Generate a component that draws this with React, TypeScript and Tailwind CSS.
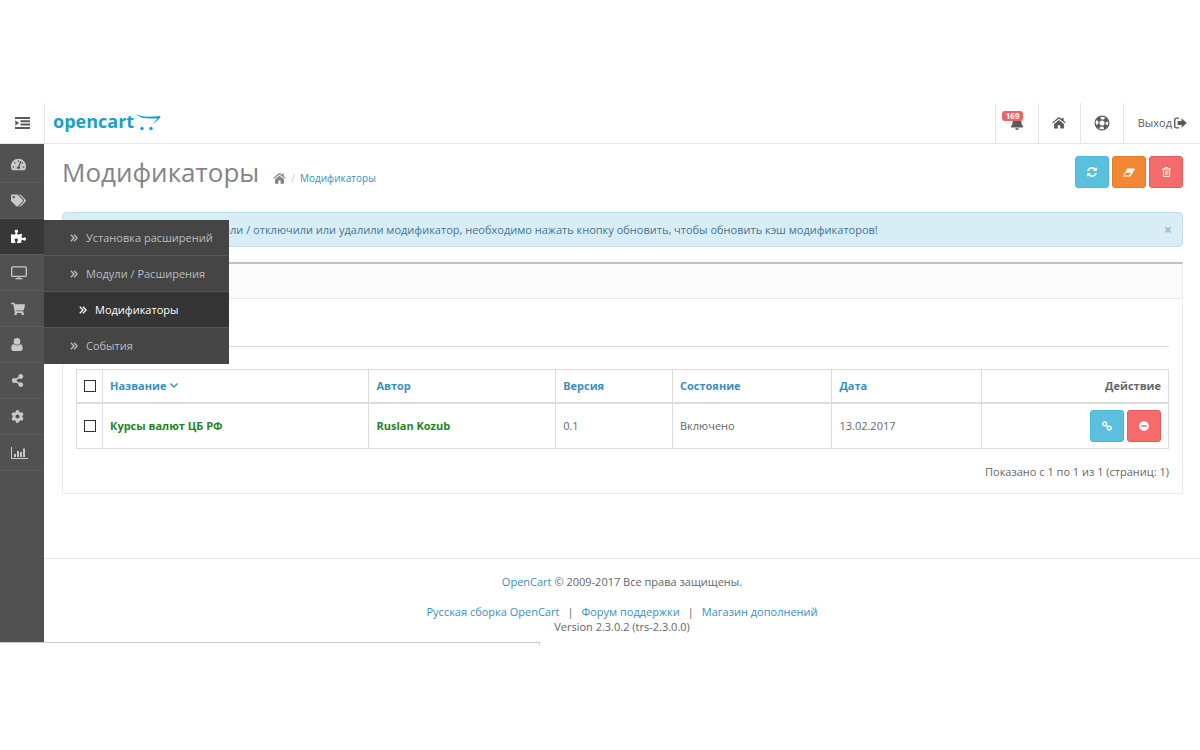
import type { ReactNode } from "react";
import {
  FaBell,
  FaCog,
  FaInfoCircle,
  FaMinusCircle,
  FaPuzzlePiece,
  FaShareAlt,
  FaShoppingCart,
  FaTachometerAlt,
  FaTags,
} from "react-icons/fa";

const DedentIcon = () => (
  <svg viewBox="0 0 15 12" className="h-3 w-[15px]" fill="currentColor">
    <path d="M0 0h15v2H0zM5.500 3.300h9.500v2H5.500zM5.500 6.600h9.500v2H5.500zM0 10h15v2H0zM0.300 3.200l3.800 2.800L0.300 8.800z" />
  </svg>
);

const HomeIcon = ({ className }: { className: string }) => (
  <svg viewBox="0 0 14 12" className={className} fill="currentColor">
    <path d="M7 2.900l4.900 4V11c0 .4-.2.600-.6.600H8.200V8.300H5.800v3.300H2.700c-.4 0-.6-.2-.6-.6V6.900z" />
    <path d="M6.300.400c.4-.3 1-.3 1.400 0l2 1.700V.900h1.900v2.700l2.200 1.900-.7.800L7 1.700.9 6.300.200 5.500z" />
  </svg>
);

const AngleIcon = () => (
  <svg viewBox="0 0 8 8" className="size-2" fill="none" stroke="currentColor" strokeWidth="1.300">
    <path d="M0.800 0.700L4 4L0.800 7.300M4 0.700L7.200 4L4 7.300" />
  </svg>
);

const ScreenIcon = () => (
  <svg viewBox="0 0 16 14" className="h-3.5 w-4" fill="none" stroke="currentColor" strokeWidth="1.3">
    <rect x="0.7" y="0.8" width="14.6" height="9.6" rx="1" />
    <path d="M8 10.4v2M4.5 12.6h7" />
  </svg>
);

const UserIcon = () => (
  <svg viewBox="0 0 12 13" className="h-[13px] w-3" fill="currentColor">
    <circle cx="6" cy="3.4" r="3.3" />
    <path d="M2.8 6C1 6.200 0.300 8 0.300 10.500C0.300 12 1.200 13 2.500 13h7c1.300 0 2.200-1 2.200-2.500C11.700 8 11 6.200 9.200 6C8.300 7 7.200 7.400 6 7.400S3.700 7 2.800 6z" />
  </svg>
);

const ChartIcon = () => (
  <svg viewBox="0 0 17 12" className="h-3 w-[17px]" fill="currentColor">
    <path d="M0 0h1v11h16v1H0zM3 7h2v3H3zM6 4h2v6H6zM9 5h2v5H9zM12 1.500h2v8.500h-2z" />
  </svg>
);

const LifeRingIcon = () => (
  <svg viewBox="0 0 16 16" className="size-4" fill="none" stroke="currentColor">
    <circle cx="8" cy="8" r="6.900" strokeWidth="1.200" />
    <circle cx="8" cy="8" r="3.200" strokeWidth="1.200" />
    <circle cx="8" cy="8" r="5.100" strokeWidth="3.200" strokeDasharray="4 4.010" strokeDashoffset="-2" />
  </svg>
);

const SignOutIcon = () => (
  <svg viewBox="0 0 13 12" className="h-3 w-[13px]" fill="currentColor">
    <path d="M5 0.500v1.300H2.600c-.8 0-1.200.4-1.200 1.200v6c0 .8.400 1.200 1.200 1.200H5v1.300H2.500C.9 11.500 0 10.600 0 9V3C0 1.400.9.500 2.500.500z" />
    <path d="M7.600 1.200L12.800 6l-5.200 4.800V8H3.600V4h4z" />
  </svg>
);

const RefreshIcon = () => (
  <svg viewBox="0 0 10 10" className="size-2.5" fill="currentColor">
    <path d="M0.100 4C.6 1.700 2.600 0 5 0c1.300 0 2.500.5 3.400 1.400L9.800.200V4H6l1.300-1.400C6.700 2 5.900 1.700 5 1.700 3.600 1.700 2.400 2.600 1.900 4z" />
    <path d="M9.900 6C9.400 8.300 7.400 10 5 10c-1.300 0-2.500-.5-3.400-1.400L.2 9.800V6H4L2.700 7.400c.6.600 1.400.9 2.300.9 1.400 0 2.600-.9 3.100-2.300z" />
  </svg>
);

const EraserIcon = () => (
  <svg viewBox="0 0 12 9" className="h-[9px] w-3" fill="currentColor">
    <path d="M4.700.500h6.600c.5 0 .8.500.5.900L7.600 7.900c-.2.300-.5.500-.9.500H.700c-.5 0-.8-.5-.5-.9L4 .900C4.100.600 4.400.500 4.700.500zM6.100 7.500l1.800-2.700H3L1.200 7.500z" />
  </svg>
);

const TrashIcon = () => (
  <svg viewBox="0 0 9 10" className="h-2.5 w-[9px]" fill="none" stroke="currentColor">
    <path d="M0 2h9M3 2V.600h3V2M1.400 2v7.400h6.200V2" />
    <path d="M3.300 3.600v4.400M4.600 3.600v4.400M5.900 3.600v4.400" strokeWidth="0.700" />
  </svg>
);

const ChainIcon = () => (
  <svg viewBox="0 0 10 10" className="size-2.5" fill="none" stroke="currentColor" strokeWidth="1.400">
    <circle cx="2.700" cy="2.900" r="1.900" />
    <circle cx="7.300" cy="7.100" r="1.900" />
    <path d="M3.500 3.700l3 2.700" />
  </svg>
);

const ChevronIcon = () => (
  <svg
    viewBox="0 0 8 5"
    className="mb-0.5 ml-px inline h-[5px] w-2"
    fill="none"
    stroke="currentColor"
    strokeWidth="1.400"
  >
    <path d="M0.500 0.500L4 4L7.500 0.500" />
  </svg>
);

const CartMark = () => (
  <svg viewBox="0 0 25 17" className="mt-0.5 h-[17px] w-[25px]" fill="#1b9fcb">
    <path d="M0 0.300C4 2.600 11 3.300 24 2.100C24.800 2.100 24.700 3 24 3.700C21.500 6.400 19 8.600 16.200 10.600C18 8.200 20 6.200 21.500 4.400C12 5 3.500 4.500 0 0.300z" />
    <circle cx="6" cy="14.500" r="1.700" />
    <circle cx="15" cy="14.500" r="1.700" />
  </svg>
);

const navItems: { label: string; icon: ReactNode }[] = [
  { label: "Панель состояния", icon: <FaTachometerAlt className="size-[15px]" /> },
  { label: "Каталог", icon: <FaTags className="size-[15px]" /> },
  { label: "Расширения", icon: <FaPuzzlePiece className="size-[15px]" /> },
  { label: "Дизайн", icon: <ScreenIcon /> },
  { label: "Продажи", icon: <FaShoppingCart className="size-3.5" /> },
  { label: "Покупатели", icon: <UserIcon /> },
  { label: "Маркетинг", icon: <FaShareAlt className="size-[13px]" /> },
  { label: "Система", icon: <FaCog className="size-[13px]" /> },
  { label: "Отчёты", icon: <ChartIcon /> },
];

const submenu = ["Установка расширений", "Модули / Расширения", "Модификаторы", "События"];
const active = "Модификаторы";

const columns = [
  { title: "Автор", width: "w-[17.1%]" },
  { title: "Версия", width: "w-[10.7%]" },
  { title: "Состояние", width: "w-[14.6%]" },
  { title: "Дата", width: "w-[13.7%]" },
];

const link = "text-[#3a8fbe] hover:underline";
const cell = "border border-[#ddd] px-[7px]";
const button = "flex h-8 w-[34px] items-center justify-center rounded-[3px] border text-white";
const topLink = "flex items-center justify-center border-l border-[#e4e4e4]";
const checkbox = "block size-3 appearance-none border border-[#333] bg-white checked:bg-[#333]";

function Header() {
  return (
    <header className="flex h-[41px] border-b border-[#e6e6e6] text-[#5a5a5a]">
      <button aria-label="Меню" className="flex w-11 shrink-0 items-center justify-center">
        <DedentIcon />
      </button>
      <a href="#" className="flex items-center gap-0.5 border-l border-[#e4e4e4] pl-2 pb-1">
        <span className="text-[18px] leading-6 font-bold text-[#1b9fcb]">opencart</span>
        <CartMark />
      </a>
      <nav className="ml-auto flex">
        <a href="#" aria-label="Уведомления" className={`${topLink} relative w-[43px]`}>
          <FaBell className="size-3.5" />
          <span className="absolute top-2 left-1.5 rounded-[3px] bg-[#ee6363] px-1 text-[8px] leading-[10px] font-bold text-white">
            169
          </span>
        </a>
        <a href="#" aria-label="Магазин" className={`${topLink} w-[42px]`}>
          <HomeIcon className="h-3 w-3.5" />
        </a>
        <a href="#" aria-label="Помощь" className={`${topLink} w-[43px]`}>
          <LifeRingIcon />
        </a>
        <a href="#" className={`${topLink} gap-0.5 pr-[13px] pl-3.5`}>
          Выход <SignOutIcon />
        </a>
      </nav>
    </header>
  );
}

function Sidebar() {
  return (
    <aside className="relative w-11 shrink-0 bg-[#515151] pt-[3px]">
      <ul>
        {navItems.map((item) => (
          <li key={item.label} className="border-b border-[#5b5b5b]">
            <a
              href="#"
              aria-label={item.label}
              className={`flex h-[35px] items-center pl-[11px] ${
                item.label === "Расширения" ? "bg-[#373737] text-white" : "text-[#c9c9c9]"
              }`}
            >
              {item.icon}
            </a>
          </li>
        ))}
      </ul>
      {/* flyout of the extensions item */}
      <ul className="absolute top-[76px] left-11 z-10 w-[185px] bg-[#454545]">
        {submenu.map((label) => (
          <li key={label} className="border-b border-[#555] last:border-transparent">
            <a
              href="#"
              className={`flex h-[35px] items-center gap-2 ${
                label === active ? "bg-[#353535] pl-[35px] text-white" : "pl-[26px] text-[#bdbdbd]"
              }`}
            >
              <AngleIcon />
              {label}
            </a>
          </li>
        ))}
      </ul>
    </aside>
  );
}

function ModificationTable() {
  return (
    <table className="w-full table-fixed border-collapse text-left">
      <thead>
        <tr className="h-[33px] border-b-2 border-[#ddd]">
          <th className={`${cell} w-[26px]`}>
            <input type="checkbox" aria-label="Выбрать все" className={checkbox} />
          </th>
          <th className={`${cell} w-[24.4%]`}>
            <a href="#" className={link}>
              Название <ChevronIcon />
            </a>
          </th>
          {columns.map((col) => (
            <th key={col.title} className={`${cell} ${col.width}`}>
              <a href="#" className={link}>
                {col.title}
              </a>
            </th>
          ))}
          <th className={`${cell} text-right`}>Действие</th>
        </tr>
      </thead>
      <tbody>
        <tr className="h-[46px]">
          <td className={cell}>
            <input type="checkbox" aria-label="Курсы валют ЦБ РФ" className={checkbox} />
          </td>
          <td className={`${cell} font-bold text-[#1f851f]`}>Курсы валют ЦБ РФ</td>
          <td className={`${cell} font-bold text-[#1f851f]`}>Ruslan Kozub</td>
          <td className={cell}>0.1</td>
          <td className={cell}>Включено</td>
          <td className={cell}>13.02.2017</td>
          <td className={cell}>
            <div className="flex justify-end gap-[3px]">
              <a href="#" aria-label="Ссылка" className={`${button} border-[#46b8da] bg-[#5bc0de]`}>
                <ChainIcon />
              </a>
              <button aria-label="Отключить" className={`${button} border-[#e25c60] bg-[#f56b6b]`}>
                <FaMinusCircle className="size-2.5" />
              </button>
            </div>
          </td>
        </tr>
      </tbody>
    </table>
  );
}

function Content() {
  return (
    <main className="pt-3 pr-[17px] pl-[18px]">
      <div className="flex items-start">
        <h1 className="text-[26px] leading-8 text-[#848484]">Модификаторы</h1>
        <nav aria-label="Навигация" className="mt-3.5 ml-3.5 flex items-center text-[10px] leading-4">
          <a href="#" aria-label="Главная" className="text-[#848484]">
            <HomeIcon className="h-[11px] w-[13px]" />
          </a>
          <span className="px-[5px] text-[#ccc]">/</span>
          <a href="#" className={link}>
            Модификаторы
          </a>
        </nav>
        <div className="ml-auto flex gap-[3px]">
          <button aria-label="Обновить" className={`${button} border-[#46b8da] bg-[#5bc0de]`}>
            <RefreshIcon />
          </button>
          <button aria-label="Очистить" className={`${button} border-[#e57b22] bg-[#f38733]`}>
            <EraserIcon />
          </button>
          <button aria-label="Удалить" className={`${button} border-[#e25c60] bg-[#f56b6b]`}>
            <TrashIcon />
          </button>
        </div>
      </div>

      <div className="mt-6 flex h-[35px] items-center gap-1 rounded-sm border border-[#c3e3ea] bg-[#d9edf7] px-2.5 text-[#3f7590]">
        <FaInfoCircle className="size-3" />
        <p>
          После того как Вы включили / отключили или удалили модификатор, необходимо нажать кнопку обновить, чтобы
          обновить кэш модификаторов!
        </p>
        <button aria-label="Закрыть" className="ml-auto text-sm font-bold text-[#a5b5be]">
          ×
        </button>
      </div>

      <section className="mt-[15px] border border-t-2 border-[#ebebeb] border-t-[#bfbfbf]">
        <div className="h-[35px] border-b border-[#e8e8e8] bg-[#fbfbfb]" />
        <div className="px-[13px] pb-[13px]">
          <div className="mb-[22px] h-12 border-b border-[#ddd]" />
          <ModificationTable />
          <p className="mt-[15px] text-right">Показано с 1 по 1 из 1 (страниц: 1)</p>
        </div>
      </section>
    </main>
  );
}

function Footer() {
  return (
    <footer className="mt-16 border-t border-[#e8e8e8] pt-[15px] pb-2 text-center leading-[15px]">
      <p>
        <a href="#" className={link}>
          OpenCart
        </a>{" "}
        © 2009-2017 Все права защищены.
      </p>
      <p className="mt-[15px] flex justify-center gap-2">
        <a href="#" className={link}>
          Русская сборка OpenCart
        </a>
        <span>|</span>
        <a href="#" className={link}>
          Форум поддержки
        </a>
        <span>|</span>
        <a href="#" className={link}>
          Магазин дополнений
        </a>
      </p>
      <p>Version 2.3.0.2 (trs-2.3.0.0)</p>
    </footer>
  );
}

export default function App() {
  return (
    <div className="min-h-screen bg-white pt-[103px] font-['Open_Sans',sans-serif] text-[11px] leading-4 text-[#666]">
      <Header />
      <div className="flex">
        <Sidebar />
        <div className="min-w-0 flex-1">
          <Content />
          <Footer />
        </div>
      </div>
      <div className="h-[3px] w-[45%] border-t border-r border-[#ccc]" />
    </div>
  );
}
